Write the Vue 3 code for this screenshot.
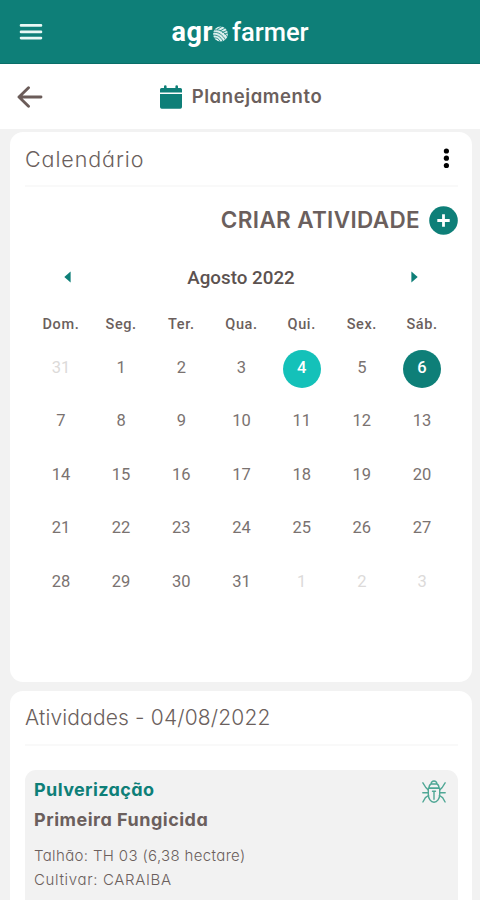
<template>
  <div class="screen">
    <header class="topbar">
      <button class="icon-button menu-button" aria-label="Menu">
        <svg width="24" height="18" viewBox="0 0 24 18">
          <path d="M2 2.4h20M2 8.9h20M2 15.1h20" stroke="#e9f8f5" stroke-width="2.6" stroke-linecap="round" />
        </svg>
      </button>
      <div class="logo">
        <span class="logo-agr">agr</span>
        <svg class="logo-mark" width="15" height="16" viewBox="0 0 15 16">
          <circle cx="7.5" cy="8" r="7.4" fill="#dcefed" />
          <g fill="none" stroke="#0e7f78" stroke-width="0.8">
            <path d="M0 6.5C5 5.5 10 9 12.5 14" />
            <path d="M0 9.3C4 8.5 8 11 9.8 15" />
            <path d="M1 12C4 11.5 6 13 7 15.5" />
            <path d="M1.5 4C7 3 12 6.5 14.5 11" />
            <path d="M7 5L13 1.5M9 6.5L15 4M11 8L15 7M4 3.5L9 .5" />
          </g>
        </svg>
        <span class="logo-farmer">farmer</span>
      </div>
    </header>

    <div class="subbar">
      <button class="icon-button back-button" aria-label="Voltar">
        <svg width="26" height="22" viewBox="0 0 26 22">
          <path d="M24 11H2M11.5 1.8L2 11l9.500 9.200" fill="none" stroke="#6b5c59" stroke-width="2.9" stroke-linecap="round" stroke-linejoin="round" />
        </svg>
      </button>
      <div class="page-title">
        <svg width="22" height="24" viewBox="0 0 22 24">
          <path d="M1.500 3H4V1.500a1.300 1.300 0 0 1 2.600 0V3h8.800V1.500a1.300 1.300 0 0 1 2.600 0V3h2.500A1.500 1.500 0 0 1 22 4.500V7.500H0V4.500A1.500 1.500 0 0 1 1.500 3zM0 9h22v13a1.700 1.700 0 0 1-1.700 1.700H1.700A1.700 1.700 0 0 1 0 22z" fill="#0e7f78" />
        </svg>
        <span class="page-title-text">Planejamento</span>
      </div>
    </div>

    <main class="content">
      <section class="card calendar-card">
        <div class="card-header">
          <h2 class="card-title calendar-title">Calendário</h2>
          <button class="icon-button" aria-label="Opções">
            <svg width="24" height="22" viewBox="0 0 24 22">
              <circle cx="12.4" cy="3" r="2.6" />
              <circle cx="12.4" cy="10.2" r="2.6" />
              <circle cx="12.4" cy="17.5" r="2.6" />
            </svg>
          </button>
        </div>

        <div class="create">
          <span class="create-text">CRIAR ATIVIDADE</span>
          <button class="icon-button" aria-label="Criar atividade">
            <svg width="29" height="29" viewBox="0 0 29 29">
              <circle cx="14.5" cy="14.5" r="14.3" fill="#0e7f78" />
              <path d="M14.5 8.300v12.400M8.300 14.500h12.400" stroke="#fff" stroke-width="2.8" />
            </svg>
          </button>
        </div>

        <div class="month-bar">
          <button class="icon-button" aria-label="Mês anterior">
            <svg width="7" height="12" viewBox="0 0 7 12"><path d="M6.600 .5v11L.3 6z" fill="#0e7f78" /></svg>
          </button>
          <span class="month">Agosto 2022</span>
          <button class="icon-button" aria-label="Próximo mês">
            <svg width="7" height="12" viewBox="0 0 7 12"><path d="M.4 .5v11L6.700 6z" fill="#0e7f78" /></svg>
          </button>
        </div>

        <div class="week">
          <span v-for="name in weekDays" :key="name">{{ name }}</span>
        </div>
        <div class="days">
          <div v-for="(day, index) in days" :key="index" class="day" :class="day.state">
            <span>{{ day.number }}</span>
          </div>
        </div>
      </section>

      <section class="card activities-card">
        <div class="card-header">
          <h2 class="card-title activities-title">Atividades - 04/08/2022</h2>
        </div>
        <article class="activity">
          <div class="activity-text">
            <div class="activity-type">Pulverização</div>
            <div class="activity-name">Primeira Fungicida</div>
            <div class="activity-info plot">Talhão: TH 03 (6,38 hectare)</div>
            <div class="activity-info crop">Cultivar: CARAIBA</div>
          </div>
          <svg class="bug" width="24" height="24" viewBox="0 0 24 24" fill="none" stroke="#4fa795" stroke-width="1.4" stroke-linecap="round" stroke-linejoin="round">
            <path d="M9 4C9.300 2 10.300 1 12 1s2.700 1 3 3zM7 8.300C7 5.800 8 4.400 9 4h6c1 .4 2 1.800 2 4.300z" />
            <path d="M6.300 8.300h11.400v6c0 4.500-2.500 7.900-5.700 7.900s-5.700-3.400-5.700-7.900zM12 11.300v8M10.500 11.300h3" />
            <path d="M6.300 10L3.800 7.500.9 2.800M17.700 10l2.500-2.500 2.900-4.700M6.300 12.800H.8M17.700 12.800h5.500M6.500 15.500L3.400 17.600.9 22M17.500 15.500l3.100 2.100 2.500 4.400" />
          </svg>
        </article>
      </section>
    </main>
  </div>
</template>

<script setup>
const weekDays = ['Dom.', 'Seg.', 'Ter.', 'Qua.', 'Qui.', 'Sex.', 'Sáb.']

const days = [{ number: 31, state: 'outside' }]

for (let i = 1; i <= 31; i++) {
  let state = ''
  if (i === 4) state = 'selected'
  if (i === 6) state = 'today'
  days.push({ number: i, state })
}

for (let i = 1; i <= 3; i++) {
  days.push({ number: i, state: 'outside' })
}
</script>

<style>
body {
  margin: 0;
  background: #f2f2f2;
}
</style>

<style scoped>
.screen {
  display: flex;
  flex-direction: column;
  height: 900px;
  overflow: hidden;
  background: #f2f2f2;
  color: #6b5f5d;
  font-family: Inter, "Liberation Sans", sans-serif;
  font-feature-settings: "cv11";
}

.icon-button {
  display: flex;
  padding: 0;
  border: 0;
  background: none;
  cursor: pointer;
}

.topbar,
.subbar {
  display: grid;
  grid-template-columns: 60px 1fr 60px;
  align-items: center;
  flex-shrink: 0;
  box-sizing: border-box;
}

.topbar {
  height: 64px;
  border-bottom: 1px solid #0a6e68;
  background: #0e7f78;
}

.menu-button {
  margin-left: 19px;
}

.logo {
  display: flex;
  justify-content: center;
  align-items: center;
  color: white;
  font-family: Roboto, sans-serif;
  font-size: 25.5px;
  line-height: 30px;
}

.logo-agr {
  font-size: 27px;
  font-weight: 700;
  letter-spacing: 0.6px;
}

.logo-mark {
  margin: 4px 4px 0 0;
}

.logo-farmer {
  font-weight: 500;
}

.subbar {
  height: 65px;
  background: white;
}

.back-button {
  margin-left: 17px;
}

.page-title {
  display: flex;
  justify-content: center;
  align-items: center;
  gap: 10px;
  padding-left: 2px;
}

.page-title-text {
  padding-bottom: 1px;
  font-size: 18.5px;
  font-weight: 600;
  line-height: 22px;
  letter-spacing: 0.6px;
}

.content {
  display: flex;
  flex-direction: column;
  gap: 9px;
  padding: 3px 8px 0 10px;
}

.card {
  flex-shrink: 0;
  box-sizing: border-box;
  padding: 0 14px 0 15px;
  border-radius: 13px;
  background: white;
}

.calendar-card {
  height: 550px;
}

.activities-card {
  height: 300px;
}

.card-header {
  display: flex;
  justify-content: space-between;
  align-items: center;
  box-sizing: border-box;
  height: 55px;
  border-bottom: 2px solid #f9f9f9;
}

.card-title {
  margin: 0;
  font-size: 21px;
  font-weight: 300;
  line-height: 28px;
}

.calendar-title {
  font-size: 21.5px;
  letter-spacing: 0.9px;
}

.activities-title {
  letter-spacing: 0.15px;
}

.create {
  display: flex;
  justify-content: flex-end;
  align-items: center;
  gap: 9px;
  height: 67px;
}

.create-text {
  padding-bottom: 3px;
  font-size: 22.5px;
  font-weight: 600;
  letter-spacing: 0.35px;
}

.month-bar {
  display: flex;
  justify-content: space-between;
  align-items: center;
  height: 46px;
  padding: 0 40px 0 39px;
  font-family: Roboto, sans-serif;
}

.month {
  padding-top: 2px;
  color: #5c5250;
  font-size: 18.8px;
  font-weight: 500;
}

.week,
.days {
  display: grid;
  grid-template-columns: repeat(7, 60.2px);
  justify-content: center;
  font-family: Roboto, sans-serif;
  text-align: center;
}

.week {
  height: 42px;
  font-size: 14.5px;
  font-weight: 500;
  line-height: 49px;
  letter-spacing: 0.6px;
}

.days {
  grid-auto-rows: 53.5px;
  color: #7a7270;
  font-size: 16.5px;
}

.day {
  display: flex;
  justify-content: center;
  align-items: center;
}

.day span {
  box-sizing: border-box;
  width: 38px;
  height: 38px;
  border-radius: 50%;
  line-height: 35px;
}

.outside {
  color: #dcdad9;
}

.selected,
.today {
  color: white;
  font-weight: 500;
}

.selected span {
  background: #14c1b9;
}

.today span {
  background: #0e7f78;
}

.activity {
  display: flex;
  justify-content: space-between;
  height: 200px;
  margin-top: 24px;
  padding: 0 12px 0 9px;
  border-radius: 11px;
  background: #f2f2f2;
}

.activity-type,
.activity-name {
  font-size: 18px;
  font-weight: 700;
  line-height: 30px;
}

.activity-type {
  margin-top: 5px;
  color: #0e7f78;
  letter-spacing: 0.4px;
}

.activity-name {
  letter-spacing: 0.5px;
}

.activity-info {
  font-size: 15px;
  font-weight: 300;
  line-height: 24px;
}

.plot {
  margin-top: 9px;
  letter-spacing: 0.35px;
}

.crop {
  letter-spacing: 0.65px;
}

.bug {
  margin-top: 10px;
}
</style>
